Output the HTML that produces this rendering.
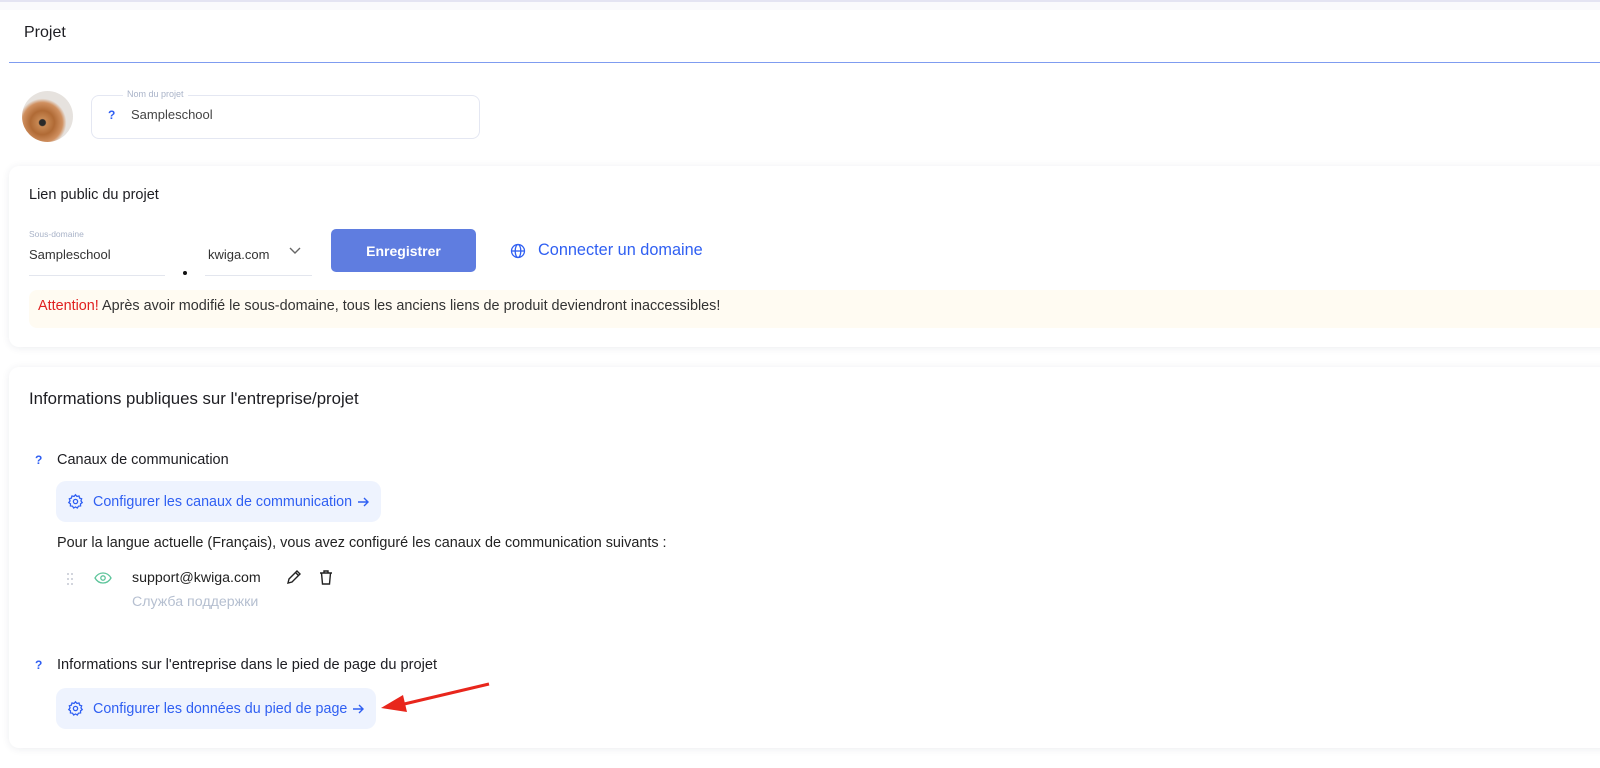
<!DOCTYPE html>
<html><head><meta charset="utf-8"><style>
*{box-sizing:border-box;margin:0;padding:0}
body{width:1600px;height:768px;background:#fff;font-family:"Liberation Sans","DejaVu Sans",sans-serif;color:#1d1d22;position:relative;overflow:hidden}
.a{position:absolute;white-space:nowrap}
.card{position:absolute;left:9px;right:-20px;background:#fff;border-radius:10px;box-shadow:0 1px 8px rgba(40,50,90,.09)}
.btn{position:absolute;background:#eef3fe;border-radius:10px;color:#2f5ff2;font-size:14.3px;display:flex;align-items:center;padding-left:11px}
.q{color:#2f5ff2;font-weight:bold;font-size:12px}
</style></head><body>
<div class="a" style="left:0;right:0;top:0;height:2px;background:#e4e4f2"></div>
<div class="a" style="left:0;right:0;top:2px;height:8px;background:#fafafc"></div>
<div class="a" style="left:24px;top:24px;font-size:16px">Projet</div>
<div class="a" style="left:9px;right:0;top:62px;height:1px;background:#7f9cf0"></div>

<div class="a" style="left:22px;top:91px;width:51px;height:51px;border-radius:50%;background:radial-gradient(circle at 40% 62%,#2a2a2a 0 3px,#c98a55 4px,#b06a35 12px,#d09060 20px,#e6e2de 24px)"></div>
<div class="a" style="left:91px;top:95px;width:389px;height:44px;border:1px solid #e4e7f2;border-radius:8px"></div>
<div class="a" style="left:123px;top:89px;background:#fff;padding:0 4px;font-size:9px;color:#a9b3c8">Nom du projet</div>
<div class="a q" style="left:108px;top:108px">?</div>
<div class="a" style="left:131px;top:107px;font-size:13px;color:#444">Sampleschool</div>

<div class="card" style="top:166px;height:181px"></div>
<div class="a" style="left:29px;top:187px;font-size:14.5px">Lien public du projet</div>
<div class="a" style="left:29px;top:229px;font-size:8.5px;color:#a9b3c8">Sous-domaine</div>
<div class="a" style="left:29px;top:247px;font-size:13px;color:#333">Sampleschool</div>
<div class="a" style="left:29px;top:275px;width:136px;height:1px;background:#e3e6ee"></div>
<div class="a" style="left:183px;top:271px;width:4px;height:4px;border-radius:50%;background:#111"></div>
<div class="a" style="left:208px;top:247px;font-size:13px;color:#333">kwiga.com</div>
<svg class="a" style="left:288px;top:246px" width="14" height="10" viewBox="0 0 14 10"><path d="M2 2l5 5 5-5" stroke="#666" stroke-width="1.4" fill="none"/></svg>
<div class="a" style="left:205px;top:275px;width:107px;height:1px;background:#e3e6ee"></div>
<div class="a" style="left:331px;top:229px;width:145px;height:43px;background:#5f7de0;border-radius:5px;color:#fff;font-size:14px;font-weight:bold;display:flex;align-items:center;justify-content:center">Enregistrer</div>
<svg class="a" style="left:510px;top:243px" width="16" height="16" viewBox="0 0 16 16" fill="none" stroke="#2f5ff2" stroke-width="1.3"><circle cx="8" cy="8" r="6.5"/><ellipse cx="8" cy="8" rx="2.8" ry="6.5"/><path d="M1.5 8h13"/></svg>
<div class="a" style="left:538px;top:241px;font-size:16.3px;color:#2f5ff2">Connecter un domaine</div>
<div class="a" style="left:29px;top:290px;right:0;height:38px;background:#fffbf2;border-radius:8px 0 0 8px"></div>
<div class="a" style="left:38px;top:298px;font-size:14.4px;color:#333"><span style="color:#e02020">Attention!</span> Après avoir modifié le sous-domaine, tous les anciens liens de produit deviendront inaccessibles!</div>

<div class="card" style="top:367px;height:381px"></div>
<div class="a" style="left:29px;top:389px;font-size:16.8px">Informations publiques sur l'entreprise/projet</div>
<div class="a q" style="left:35px;top:453px">?</div>
<div class="a" style="left:57px;top:452px;font-size:14.5px">Canaux de communication</div>
<div class="btn" style="left:56px;top:481px;width:325px;height:41px"><svg width="17" height="17" viewBox="0 0 24 24" fill="none" stroke="#2f5ff2" stroke-width="1.8"><circle cx="12" cy="12" r="3"/><path d="M12 2.5l2 2.3 3-.6.8 3 2.9 1-1 2.9 1.8 2.4-2.4 1.8.1 3-3 .3-1.6 2.6L12 19.7l-2.6 1.5-1.6-2.6-3-.3.1-3L2.5 13.5l1.8-2.4-1-2.9 2.9-1 .8-3 3 .6z"/></svg><span style="margin-left:9px">Configurer les canaux de communication</span><svg style="margin-left:5px" width="12" height="12" viewBox="0 0 12 12" fill="none" stroke="#2f5ff2" stroke-width="1.4"><path d="M1 6h10M7 2l4 4-4 4"/></svg></div>
<div class="a" style="left:57px;top:535px;font-size:14.4px;color:#222">Pour la langue actuelle (Français), vous avez configuré les canaux de communication suivants :</div>
<svg class="a" style="left:66px;top:572px" width="8" height="14"><g fill="#c3c8d2"><circle cx="2" cy="2" r="1"/><circle cx="6" cy="2" r="1"/><circle cx="2" cy="7" r="1"/><circle cx="6" cy="7" r="1"/><circle cx="2" cy="12" r="1"/><circle cx="6" cy="12" r="1"/></g></svg>
<svg class="a" style="left:94px;top:572px" width="18" height="12" viewBox="0 0 18 12" fill="none" stroke="#5cc49a" stroke-width="1.3"><path d="M1 6c2-3.5 5-5 8-5s6 1.5 8 5c-2 3.5-5 5-8 5S3 9.5 1 6z"/><circle cx="9" cy="6" r="2.2"/></svg>
<div class="a" style="left:132px;top:570px;font-size:14.2px;color:#222">support@kwiga.com</div>
<svg class="a" style="left:285px;top:569px" width="17" height="17" viewBox="0 0 17 17" fill="none" stroke="#222" stroke-width="1.4"><path d="M3 14l1-4 8-8 3 3-8 8zM10.5 3.5l3 3"/></svg>
<svg class="a" style="left:318px;top:569px" width="16" height="17" viewBox="0 0 16 17" fill="none" stroke="#222" stroke-width="1.4"><path d="M2 4h12M6 4V2h4v2M3.5 4l1 11h7l1-11"/></svg>
<div class="a" style="left:132px;top:594px;font-size:14.2px;color:#b5bfd0">Служба поддержки</div>
<div class="a q" style="left:35px;top:658px">?</div>
<div class="a" style="left:57px;top:657px;font-size:14.6px">Informations sur l'entreprise dans le pied de page du projet</div>
<div class="btn" style="left:56px;top:688px;width:320px;height:41px"><svg width="17" height="17" viewBox="0 0 24 24" fill="none" stroke="#2f5ff2" stroke-width="1.8"><circle cx="12" cy="12" r="3"/><path d="M12 2.5l2 2.3 3-.6.8 3 2.9 1-1 2.9 1.8 2.4-2.4 1.8.1 3-3 .3-1.6 2.6L12 19.7l-2.6 1.5-1.6-2.6-3-.3.1-3L2.5 13.5l1.8-2.4-1-2.9 2.9-1 .8-3 3 .6z"/></svg><span style="margin-left:9px">Configurer les données du pied de page</span><svg style="margin-left:5px" width="12" height="12" viewBox="0 0 12 12" fill="none" stroke="#2f5ff2" stroke-width="1.4"><path d="M1 6h10M7 2l4 4-4 4"/></svg></div>
<svg class="a" style="left:375px;top:675px" width="120" height="45" viewBox="0 0 120 45"><path d="M114 9L25 30" stroke="#e8261c" stroke-width="3" fill="none"/><path d="M6 33l22-13 4 17z" fill="#e8261c"/></svg>
</body></html>
